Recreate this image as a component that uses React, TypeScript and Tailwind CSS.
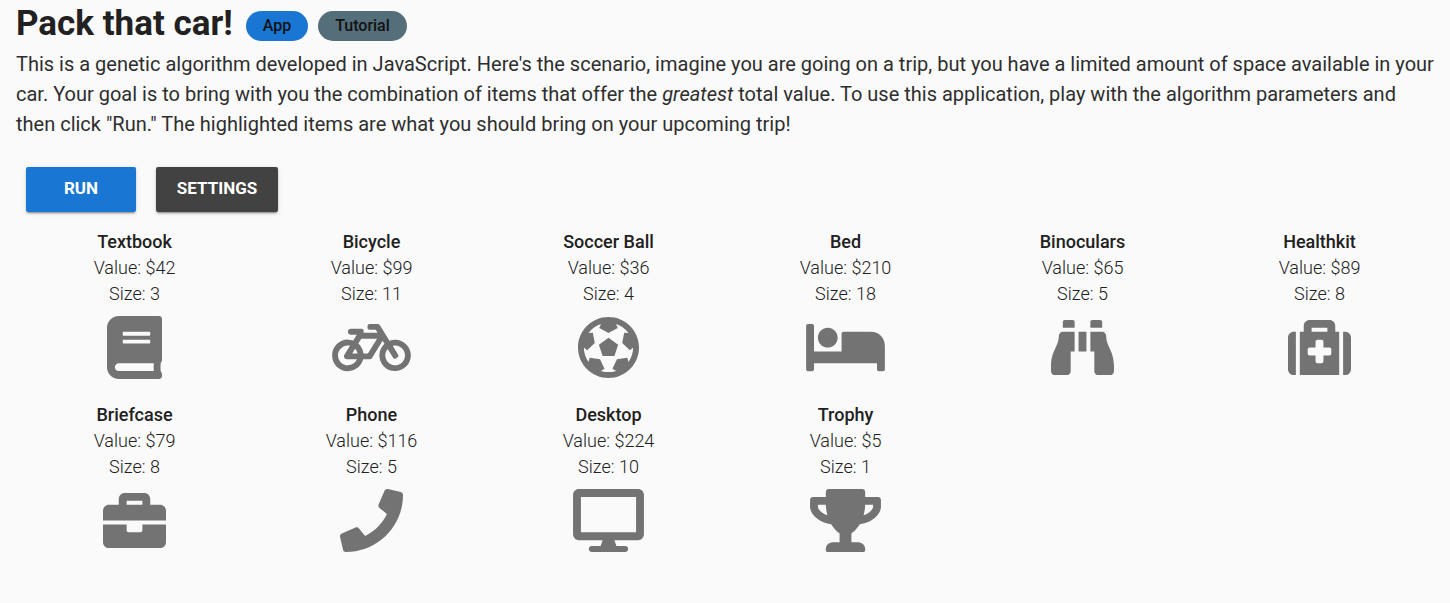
import type { IconType } from "react-icons";
import {
  FaBook,
  FaBicycle,
  FaFutbol,
  FaBed,
  FaBinoculars,
  FaMedkit,
  FaBriefcase,
  FaPhone,
  FaDesktop,
  FaTrophy,
} from "react-icons/fa";

type Item = { name: string; value: number; size: number; Icon: IconType; iconWidth: string };

const items: Item[] = [
  { name: "Textbook", value: 42, size: 3, Icon: FaBook, iconWidth: "w-[55px]" },
  { name: "Bicycle", value: 99, size: 11, Icon: FaBicycle, iconWidth: "w-[79px]" },
  { name: "Soccer Ball", value: 36, size: 4, Icon: FaFutbol, iconWidth: "w-[63px]" },
  { name: "Bed", value: 210, size: 18, Icon: FaBed, iconWidth: "w-[79px]" },
  { name: "Binoculars", value: 65, size: 5, Icon: FaBinoculars, iconWidth: "w-[63px]" },
  { name: "Healthkit", value: 89, size: 8, Icon: FaMedkit, iconWidth: "w-[63px]" },
  { name: "Briefcase", value: 79, size: 8, Icon: FaBriefcase, iconWidth: "w-[63px]" },
  { name: "Phone", value: 116, size: 5, Icon: FaPhone, iconWidth: "w-[63px]" },
  { name: "Desktop", value: 224, size: 10, Icon: FaDesktop, iconWidth: "w-[71px]" },
  { name: "Trophy", value: 5, size: 1, Icon: FaTrophy, iconWidth: "w-[71px]" },
];

function ItemCard({ name, value, size, Icon, iconWidth }: Item) {
  return (
    <li className="flex flex-col items-center text-lg leading-[26px] font-light">
      <h2 className="font-medium">{name}</h2>
      <p>Value: ${value}</p>
      <p>Size: {size}</p>
      <Icon className={`mt-[9px] h-[63px] text-[#737373] ${iconWidth}`} aria-hidden="true" />
    </li>
  );
}

export default function App() {
  return (
    <main className="min-h-screen bg-[#fafafa] pr-3 pb-12 pl-4 font-['Roboto',sans-serif] text-[#212121]">
      <header className="flex items-center">
        <h1 className="text-[35px] leading-[48px] font-bold">Pack that car!</h1>
        <nav className="mt-1 ml-[13px] flex gap-2.5 text-base font-medium text-[#121212]">
          <a href="#app" className="flex h-[30px] items-center rounded-full bg-[#1976d2] px-[17px]">
            App
          </a>
          <a href="#tutorial" className="flex h-[30px] items-center rounded-full bg-[#546e7a] px-[17px]">
            Tutorial
          </a>
        </nav>
      </header>
      <p className="mt-px text-xl leading-[30px] text-[#2e2e2e]">
        This is a genetic algorithm developed in JavaScript. Here's the scenario, imagine you are
        going on a trip, but you have a limited amount of space available in your car. Your goal is
        to bring with you the combination of items that offer the <em>greatest</em> total value. To
        use this application, play with the algorithm parameters and then click "Run." The
        highlighted items are what you should bring on your upcoming trip!
      </p>
      <div className="mt-7 ml-2.5 flex gap-5 text-[17px] font-bold text-white">
        <button className="h-[45px] w-[110px] rounded-xs bg-[#1976d2] pb-px shadow-[0_3px_1px_-2px_rgba(0,0,0,0.2),0_2px_2px_rgba(0,0,0,0.14),0_1px_5px_rgba(0,0,0,0.12)]">
          RUN
        </button>
        <button className="h-[45px] w-[122px] rounded-xs bg-[#424242] pb-px shadow-[0_3px_1px_-2px_rgba(0,0,0,0.2),0_2px_2px_rgba(0,0,0,0.14),0_1px_5px_rgba(0,0,0,0.12)]">
          SETTINGS
        </button>
      </div>
      <ul className="mt-[17px] grid grid-cols-6 gap-y-[23px]">
        {items.map((item) => (
          <ItemCard key={item.name} {...item} />
        ))}
      </ul>
    </main>
  );
}
